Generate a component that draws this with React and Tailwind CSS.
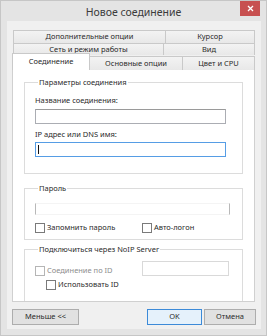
import React from "react";

const font = { fontFamily: '"Noto Sans", "Open Sans", Arial, sans-serif' };

function Tab({ label, className = "" }) {
  return (
    <div
      className={`flex items-center justify-center border-t border-l border-[#c9c9c9] bg-gradient-to-b from-[#f3f3f3] to-[#e8e8e8] text-[7.5px] leading-none text-[#2a2a2a] ${className}`}
    >
      {label}
    </div>
  );
}

function Check({ label, disabled = false, className = "" }) {
  return (
    <div className={`flex items-center gap-[2px] ${className}`}>
      <span
        className={`block w-[10px] h-[10px] bg-white border ${
          disabled ? "border-[#b5b5b5]" : "border-[#7a7a7a]"
        }`}
      />
      <span className={`text-[7.5px] leading-[11px] ${disabled ? "text-[#8d8d8d]" : "text-[#2a2a2a]"}`}>
        {label}
      </span>
    </div>
  );
}

function Group({ title, className = "", children }) {
  return (
    <fieldset className={`ml-[11px] w-[219px] border border-[#dcdcdc] ${className}`}>
      <legend className="ml-[3px] px-[1px] text-[7.5px] leading-[11px] text-[#2a2a2a]">{title}</legend>
      {children}
    </fieldset>
  );
}

export default function App() {
  return (
    <div
      className="w-[267px] h-[336px] bg-[#e4e4e4] border border-[#c6c6c6] flex flex-col overflow-hidden"
      style={font}
    >
      {/* title bar */}
      <div className="relative h-[20px] flex items-center justify-center">
        <span className="text-[10.5px] text-[#3b3b3b] mt-[3px]">Новое соединение</span>
        <div className="absolute right-[6px] top-0 w-[20px] h-[15px] bg-[#c75050] flex items-center justify-center">
          <svg width="7" height="7" viewBox="0 0 7 7">
            <path d="M1 1L6 6M6 1L1 6" stroke="#fff" strokeWidth="1.3" />
          </svg>
        </div>
      </div>

      {/* client area */}
      <div className="ml-[6px] w-[254px] h-[308px] bg-[#f0f0f0] pt-[9px]">
        {/* tab rows */}
        <div className="ml-[6px] w-[242px] flex h-[13px]">
          <Tab label="Дополнительные опции" className="w-[152px]" />
          <Tab label="Курсор" className="flex-1 border-r" />
        </div>
        <div className="ml-[6px] w-[242px] flex h-[12px]">
          <Tab label="Сеть и режим работы" className="w-[150px]" />
          <Tab label="Вид" className="flex-1 border-r" />
        </div>
        <div className="ml-[5px] w-[243px] flex items-end h-[17px] -mt-[2px] relative z-10">
          <div className="w-[78px] h-[17px] bg-white border-t border-l border-r border-[#c9c9c9] flex items-center justify-center text-[7.5px] leading-none text-[#2a2a2a]">
            Соединение
          </div>
          <Tab label="Основные опции" className="w-[92px] h-[14px] border-l-0" />
          <Tab label="Цвет и CPU" className="flex-1 h-[14px] border-r" />
        </div>

        {/* panel */}
        <div className="ml-[5px] w-[243px] h-[233px] -mt-[1px] bg-white border border-[#d0d0d0] pt-[7px] overflow-hidden">
          <Group title="Параметры соединения" className="pl-[10px] pb-[16px]">
            <div className="mt-[7px] text-[7.5px] leading-[11px] text-[#2a2a2a]">Название соединения:</div>
            <div className="mt-[3px] w-[191px] h-[15px] border border-[#abadb3] border-t-[#9a9a9a] bg-white" />
            <div className="mt-[5px] text-[7.5px] leading-[11px] text-[#2a2a2a]">IP адрес или DNS имя:</div>
            <div className="mt-[2px] w-[191px] h-[15px] border border-[#569de5] bg-white flex items-center pl-[2px]">
              <span className="block w-px h-[9px] bg-[#111]" />
            </div>
          </Group>

          <Group title="Пароль" className="mt-[9px] pl-[10px] pb-[6px]">
            <div className="mt-[9px] w-[195px] h-[12px] border-x border-x-[#b8b8b8] border-y border-y-[#f4f4f4]" />
            <div className="mt-[7px] flex">
              <Check label="Запомнить пароль" className="w-[107px]" />
              <Check label="Авто-логон" />
            </div>
          </Group>

          <Group title="Подключиться через NoIP Server" className="mt-[4px] pl-[10px] pb-[16px]">
            <div className="mt-[6px] flex items-center">
              <Check label="Соединение по ID" disabled className="w-[107px] mt-[4px]" />
              <div className="w-[87px] h-[15px] border border-[#d9d9d9] bg-white" />
            </div>
            <Check label="Использовать ID" className="ml-[11px] mt-[3px]" />
          </Group>
        </div>

        {/* buttons */}
        <div className="flex mt-[7px] ml-[5px] w-[244px] h-[16px]">
          <button className="w-[67px] h-full bg-[#e1e1e1] border border-[#adadad] text-[7.5px] leading-none text-[#2a2a2a]">
            Меньше &lt;&lt;
          </button>
          <button className="ml-auto w-[55px] h-full bg-[#e5f1fb] border border-[#3c8ad8] text-[7.5px] leading-none text-[#2a2a2a]">
            OK
          </button>
          <button className="ml-[2px] w-[52px] h-full bg-[#e1e1e1] border border-[#adadad] text-[7.5px] leading-none text-[#2a2a2a]">
            Отмена
          </button>
        </div>
      </div>
    </div>
  );
}
